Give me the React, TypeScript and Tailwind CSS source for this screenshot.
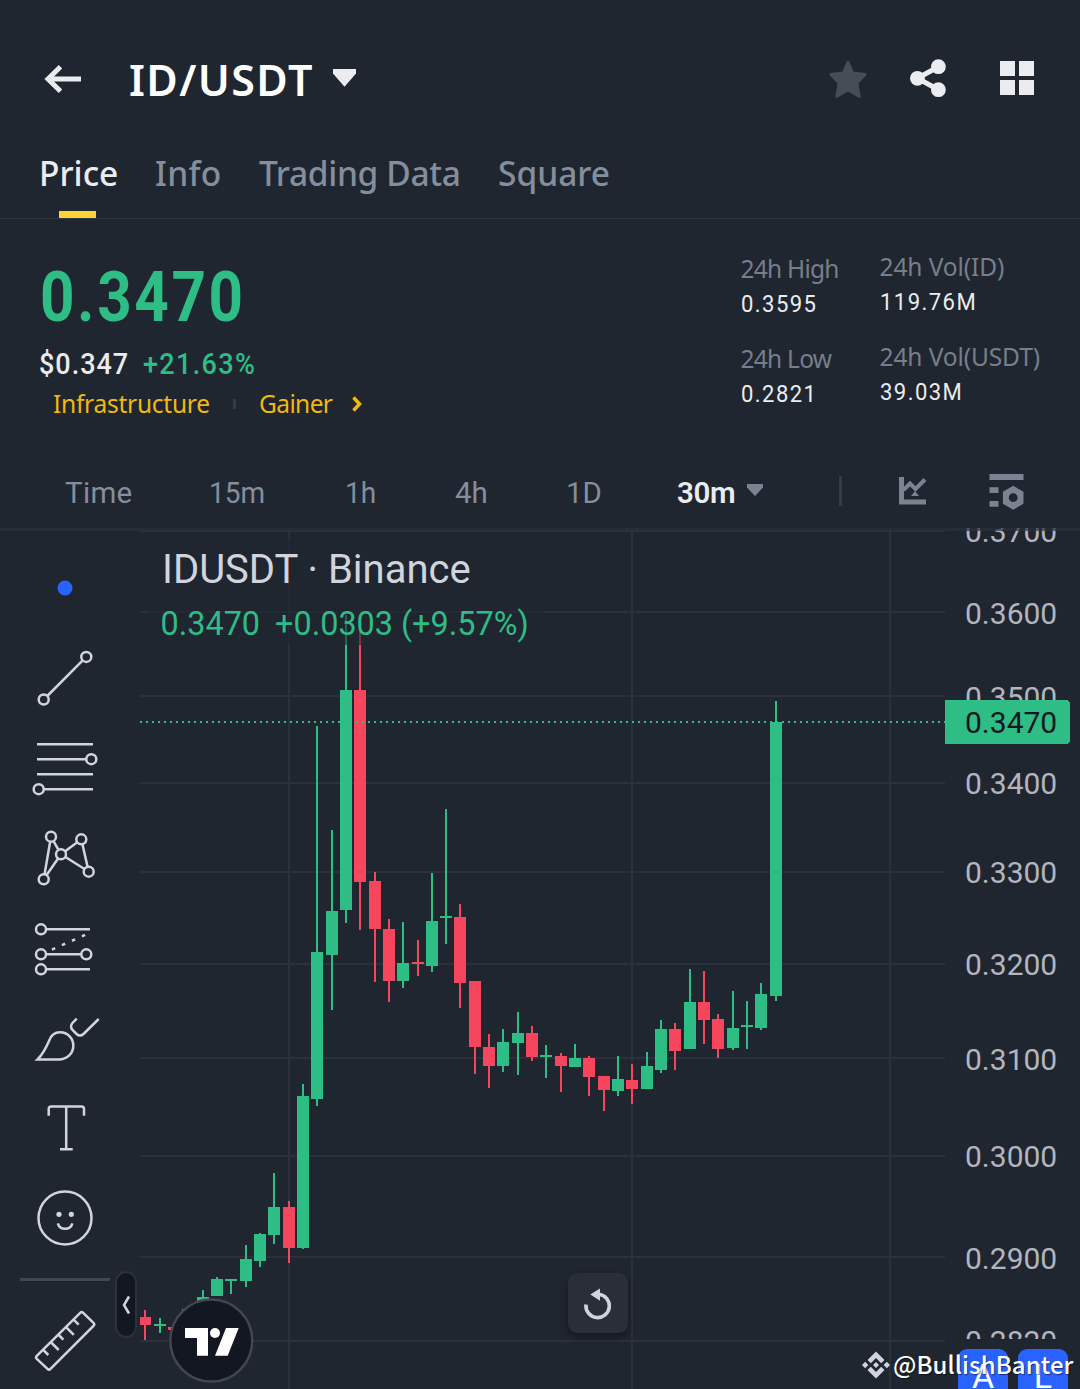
import type { ReactNode } from "react";

const GREEN = "#2ebd85";
const RED = "#f6465d";

/* x centre, body top, body bottom, wick top, wick bottom, direction */
type Candle = [number, number, number, number, number, "u" | "d"];

const candles: Candle[] = [
  [145, 1317, 1325, 1310, 1340, "d"],
  [160, 1324, 1326, 1318, 1333, "u"],
  [174, 1327, 1330, 1325, 1334, "d"],
  [188, 1309, 1328, 1307, 1330, "u"],
  [203, 1297, 1309, 1290, 1312, "u"],
  [217, 1279, 1296, 1277, 1296, "u"],
  [231, 1279, 1281, 1279, 1294, "u"],
  [246, 1259, 1281, 1245, 1287, "u"],
  [260, 1234, 1261, 1233, 1267, "u"],
  [274, 1207, 1235, 1173, 1244, "u"],
  [289, 1207, 1248, 1201, 1263, "d"],
  [303, 1096, 1248, 1084, 1249, "u"],
  [317, 952, 1099, 726, 1106, "u"],
  [332, 911, 955, 830, 1010, "u"],
  [346, 690, 910, 615, 923, "u"],
  [360, 690, 882, 632, 930, "d"],
  [375, 881, 929, 872, 982, "d"],
  [389, 929, 981, 919, 1002, "d"],
  [403, 963, 981, 922, 988, "u"],
  [418, 962, 964, 940, 976, "d"],
  [432, 921, 966, 873, 972, "u"],
  [446, 916, 918, 809, 944, "u"],
  [460, 917, 983, 904, 1008, "d"],
  [475, 981, 1047, 981, 1074, "d"],
  [489, 1047, 1066, 1034, 1088, "d"],
  [503, 1042, 1066, 1029, 1072, "u"],
  [518, 1033, 1043, 1012, 1075, "u"],
  [532, 1033, 1057, 1026, 1061, "d"],
  [546, 1055, 1057, 1045, 1078, "u"],
  [561, 1056, 1066, 1053, 1092, "d"],
  [575, 1058, 1067, 1044, 1067, "u"],
  [589, 1058, 1077, 1056, 1096, "d"],
  [604, 1076, 1090, 1076, 1111, "d"],
  [618, 1079, 1091, 1056, 1096, "u"],
  [632, 1080, 1089, 1064, 1104, "d"],
  [647, 1066, 1089, 1052, 1089, "u"],
  [661, 1029, 1070, 1020, 1073, "u"],
  [675, 1029, 1051, 1023, 1070, "d"],
  [690, 1002, 1049, 969, 1049, "u"],
  [704, 1002, 1020, 971, 1044, "d"],
  [718, 1019, 1049, 1014, 1058, "d"],
  [733, 1028, 1048, 991, 1050, "u"],
  [747, 1025, 1027, 1001, 1049, "u"],
  [761, 994, 1028, 983, 1030, "u"],
  [776, 722, 996, 701, 1001, "u"],
];

const gridRows = [531, 612, 696, 783, 872, 964, 1058, 1156, 1257, 1341];
const gridCols = [289, 632, 890];

const axisLabels: [string, number][] = [
  ["0.3700", 542],
  ["0.3600", 624],
  ["0.3500", 708],
  ["0.3400", 794],
  ["0.3300", 883],
  ["0.3200", 975],
  ["0.3100", 1070],
  ["0.3000", 1167],
  ["0.2900", 1269],
  ["0.2820", 1352],
];

function Header() {
  return (
    <header className="flex h-[156px] items-center pl-11 pr-[46px]">
      <svg width="40" height="34" viewBox="0 0 40 34" fill="none" stroke="#eaecef" strokeWidth="5" className="mt-[1px] shrink-0">
        <path d="M16.5 4.8 4 17l12.5 12.2M4 17h33" />
      </svg>
      <h1 className="mt-[3px] ml-[45px] w-[204px] whitespace-nowrap text-[43px] leading-[56px] font-semibold tracking-[1.4px] text-white">
        ID/USDT
      </h1>
      <svg width="24" height="18" viewBox="0 0 24 18" fill="#eaecef">
        <path d="M0 0h23v4.5L11.5 17.7 0 4.5z" />
      </svg>
      <svg width="40" height="40" viewBox="0 0 40 40" className="mt-[1px] mr-[0.5px] ml-auto" fill="#474d57" stroke="#474d57" strokeWidth="3" strokeLinejoin="round">
        <path d="m20 3.5 4.6 10.4 12.4 1.5-8.2 8.6 2.3 13.2L20 30.8 8.900 37.200 11.200 24 3 15.400l12.400-1.500z" />
      </svg>
      <svg width="38" height="40" viewBox="0 0 38 40" className="ml-[41px]" fill="#eaecef">
        <path d="M29.500 8.700 8.400 20.300l21.100 11.400" fill="none" stroke="#eaecef" strokeWidth="5" />
        <circle cx="29.400" cy="8.700" r="7.400" />
        <circle cx="8.400" cy="20.300" r="7.400" />
        <circle cx="29.400" cy="31.700" r="7.400" />
      </svg>
      <svg width="34" height="34" viewBox="0 0 34 34" className="ml-[53px]" fill="#eaecef">
        <path d="M0 0h15v15H0zM19 0h15v15H19zM0 19h15v15H0zM19 19h15v15H19z" />
      </svg>
    </header>
  );
}

function Tabs() {
  return (
    <nav className="flex h-[63px] border-b border-[#2f3743] pl-[39px] text-[33.500px] leading-[34px] font-medium whitespace-nowrap text-[#848e9c]">
      <div className="flex w-[116px] flex-col justify-between">
        <span className="text-[#eaecef]">Price</span>
        <span className="ml-5 h-[7.500px] w-[37px] bg-[#fcd535]" />
      </div>
      <span className="w-[104px] tracking-[0.300px]">Info</span>
      <span className="w-[239px] tracking-[-0.350px]">Trading Data</span>
      <span>Square</span>
    </nav>
  );
}

function Stat({ label, value, tight = false }: { label: string; value: string; tight?: boolean }) {
  return (
    <div className="h-[90px] whitespace-nowrap">
      <div className={tight ? "text-[24.500px] leading-[35px] tracking-[-0.750px] text-[#767e8b]" : "text-[24.500px] leading-[35px] tracking-[-0.100px] text-[#767e8b]"}>{label}</div>
      <div className="origin-left scale-x-90 font-['Roboto'] text-[24.500px] leading-[35px] tracking-[1.600px] text-[#eaecef]">{value}</div>
    </div>
  );
}

function Summary() {
  return (
    <section className="flex h-[240px] pl-[39px]">
      <div className="w-[701.500px] pt-[38px] whitespace-nowrap">
        <div className="ml-[1px] h-[80px] origin-left scale-x-[0.86] font-['Roboto'] text-[70px] leading-[80px] font-bold tracking-[3px] text-[#2ebd85]">0.3470</div>
        <div className="mt-[8px] flex h-[38px] font-['Roboto'] text-[30px] leading-[38px] font-medium">
          <span className="w-[104px] origin-left scale-x-90 tracking-[1.100px] text-[#eaecef]">$0.347</span>
          <span className="origin-left scale-x-90 tracking-[1.500px] text-[#2ebd85]">+21.63%</span>
        </div>
        <div className="mt-[2px] flex h-[37px] items-center pl-[14px] text-[24.500px] leading-[37px] text-[#f0b90b]">
          <span className="w-[180px] tracking-[-0.250px]">Infrastructure</span>
          <span className="h-[10px] w-[3px] bg-[#333b47]" />
          <span className="ml-[23px] w-[93px] tracking-[-0.600px]">Gainer</span>
          <svg width="10" height="16" viewBox="0 0 10 16" fill="none" stroke="#f0b90b" strokeWidth="3.500">
            <path d="m1.500 1.500 6 6.500-6 6.500" />
          </svg>
        </div>
      </div>
      <div className="w-[139px] pt-[32px]">
        <Stat label="24h High" value="0.3595" tight />
        <Stat label="24h Low" value="0.2821" tight />
      </div>
      <div className="pt-[30px]">
        <Stat label="24h Vol(ID)" value="119.76M" />
        <Stat label="24h Vol(USDT)" value="39.03M" />
      </div>
    </section>
  );
}

function Intervals() {
  return (
    <div className="flex h-[69px] items-center pb-[2px] pl-[65px] font-['Roboto'] text-[29.500px] leading-[40px] whitespace-nowrap text-[#848e9c]">
      <span className="w-[144px] tracking-[0.300px]">Time</span>
      <span className="w-[136px] origin-left scale-x-95">15m</span>
      <span className="w-[110px] origin-left scale-x-95">1h</span>
      <span className="w-[111px]">4h</span>
      <span className="w-[111px]">1D</span>
      <span className="w-[70px] font-semibold tracking-[-0.300px] text-[#eaecef]">30m</span>
      <svg width="16" height="12" viewBox="0 0 16 12" fill="#7b8290" className="-mt-1.5">
        <path d="M0 0h16v3.500L8 12 0 3.500z" />
      </svg>
      <span className="-mt-1 ml-[76px] h-[30px] w-[3px] bg-[#333b47]" />
      <svg width="28" height="28" viewBox="0 0 28 28" fill="none" stroke="#7b8290" className="-mt-1 ml-[57px]">
        <path d="M2.500 0v25H27" strokeWidth="5" />
        <path d="m4.500 13 6.500-6.500 5.500 5.500 9.500-9.500" strokeWidth="4" />
        <path d="M12 19h8l-4-5z" fill="#7b8290" stroke="none" />
      </svg>
      <svg width="36" height="36" viewBox="0 0 36 36" fill="#7b8290" className="-mt-0.5 ml-[62px]">
        <path d="M.500 0h34v6h-34zM.500 13.300h9v5.700h-9zM.500 27h9v5.700h-9z" />
        <path fillRule="evenodd" d="m24.200 11.800 10.300 6v11.900l-10.300 6-10.300-6V17.800zm0 7.500a4.400 4.400 0 1 0 0 8.800 4.400 4.400 0 0 0 0-8.800z" />
      </svg>
    </div>
  );
}

function Tool({ children }: { children: ReactNode }) {
  return (
    <svg width="90" height="90" viewBox="0 0 90 90" fill="none" stroke="#d1d4dc" strokeWidth="2.500" className="block shrink-0">
      {children}
    </svg>
  );
}

function Toolbar() {
  return (
    <aside className="relative flex w-[140px] shrink-0 flex-col pt-[15px] pl-5">
      <Tool>
        <circle cx="45" cy="45" r="7.500" fill="#2962ff" stroke="none" />
      </Tool>
      <Tool>
        <path d="M27.300 63 62.700 27.400" />
        <circle cx="23.700" cy="66.500" r="5" />
        <circle cx="66.300" cy="23.900" r="5" />
      </Tool>
      <Tool>
        <path d="M17 21.200h56M17 36.200h49M17 51.200h56M24 66.200h49" />
        <circle cx="71.300" cy="36.200" r="5" />
        <circle cx="18.700" cy="66.200" r="5" />
      </Tool>
      <Tool>
        <path d="M31 23.700 41 41.300 61.300 26.300 68.700 58.700 41 41.300 23.700 66.300z" />
        <g fill="#202630">
          <circle cx="31" cy="23.700" r="5" />
          <circle cx="61.300" cy="26.300" r="5" />
          <circle cx="41" cy="41.300" r="5" />
          <circle cx="23.700" cy="66.300" r="5" />
          <circle cx="68.700" cy="58.700" r="5" />
        </g>
      </Tool>
      <Tool>
        <path d="M26 26.300h44M26 51.300h35M26 66.300h44" />
        <path d="M32 46.600 66 31.500" strokeDasharray="3.500 7.400" />
        <circle cx="21" cy="26.300" r="5" />
        <circle cx="21" cy="51.300" r="5" />
        <circle cx="21" cy="66.300" r="5" />
        <circle cx="66.300" cy="51.300" r="5" />
      </Tool>
      <Tool>
        <path d="M17.500 66.500C22 62 26 55 29 48c2-6 6-8.700 11-8.700 8 0 13.300 6.200 13.300 13.200 0 8.500-6.800 14-14.300 14z" />
        <path d="m56.700 25.700-4.200 4.300q-3 3.300 0 7l4 4q3.500 3 7 0l15.200-15" />
      </Tool>
      <Tool>
        <path d="M28.700 32.700v-6.700q0-2.500 2.500-2.500h30.300q2.500 0 2.500 2.500v6.700M46.200 23.500v42.800M40 66.300h12.700" />
      </Tool>
      <Tool>
        <circle cx="45" cy="45" r="26.500" />
        <circle cx="39" cy="41.300" r="2.600" fill="#d1d4dc" stroke="none" />
        <circle cx="51.300" cy="41.300" r="2.600" fill="#d1d4dc" stroke="none" />
        <path d="M37.800 50.300a7.600 7.600 0 0 0 14.600 0" />
      </Tool>
      <div className="mt-[15px] mb-[15px] h-[3px] w-[90px] bg-[#434651]" />
      <Tool>
        <path strokeLinejoin="round" d="M60.200 16.800q1.500-1.500 3 0l10.300 10q1.500 1.500 0 3L30.500 72.800q-1.500 1.500-3 0L16.800 62.800q-1.500-1.500 0-3z" />
        <path d="m23 53.700 5.300 5.300M30.700 46l8 8M38.200 38.500l5.200 5.200M45.800 30.800l8 8M53.300 23.300l5.400 5.400" />
      </Tool>
      <div className="absolute top-[743px] left-[115px] flex h-[67px] w-[22px] items-center justify-center rounded-full border-2 border-[#2b303b] bg-[#131722]">
        <svg width="10" height="20" viewBox="0 0 10 20" fill="none" stroke="#d1d4dc" strokeWidth="2.500">
          <path d="M8 1.500 3 10l5 8.500" />
        </svg>
      </div>
    </aside>
  );
}

function CandleChart() {
  return (
    <svg width="940" height="861" viewBox="140 528 940 861" shapeRendering="crispEdges" className="block">
      <g fill="#2b303b">
        {gridRows.map((y) => (
          <rect key={y} x="140" y={y - 1} width="805" height="2" />
        ))}
        {gridCols.map((x) => (
          <rect key={x} x={x - 1} y="528" width="2" height="861" />
        ))}
      </g>
      {candles.map(([x, top, bottom, high, low, dir]) => (
        <g key={x} fill={dir === "u" ? GREEN : RED}>
          <rect x={x - 1} y={high} width="2" height={low - high} />
          <rect x={x === 145 ? 140 : x - 6} y={top} width={x === 145 ? 11 : 12} height={bottom - top} />
        </g>
      ))}
      <path d="M140 722H945" stroke={GREEN} strokeWidth="2" strokeDasharray="2 4" />
      <g fill="#b2b5be" fontFamily="Roboto, sans-serif" fontSize="30">
        {axisLabels.map(([label, y]) => (
          <text key={label} x="965" y={y}>
            {label}
          </text>
        ))}
      </g>
      <rect x="946" y="1339" width="134" height="50" fill="#202630" />
      <path d="M945 700h121q4 0 4 4v36q0 4-4 4H945z" fill={GREEN} />
      <text x="965" y="733" fill="#131722" fontFamily="Roboto, sans-serif" fontSize="30">
        0.3470
      </text>
    </svg>
  );
}

function Legend() {
  return (
    <div className="absolute top-[10px] left-[10px] h-[107px] w-[393px] bg-[#202630]/60 pl-[12px] font-['Roboto'] whitespace-nowrap">
      <div className="pt-[5px] text-[40px] leading-[54px] text-[#d1d4dc]">IDUSDT · Binance</div>
      <div className="-ml-[1.500px] flex gap-[15px] text-[32.400px] leading-[54px] text-[#2ebd85]">
        <span>0.3470</span>
        <span>+0.0303 (+9.57%)</span>
      </div>
    </div>
  );
}

function ChartOverlays() {
  return (
    <>
      <svg width="86" height="86" viewBox="0 0 86 86" className="absolute top-[769px] left-[28px]">
        <circle cx="43.300" cy="43.600" r="41" fill="#131722" stroke="#434651" strokeWidth="2.500" />
        <g fill="#fff">
          <path d="M17 31h23v27.700H29V41H17zM58 31h12.700l-11 27.700H47z" />
          <circle cx="47" cy="36" r="5" />
        </g>
      </svg>
      <button className="absolute top-[745px] left-[428px] flex h-[60px] w-[60px] items-center justify-center rounded-[9px] bg-[#2a2e39] shadow-[0_4px_8px_rgba(0,0,0,0.4)]">
        <svg width="60" height="60" viewBox="0 0 60 60" fill="none">
          <path d="M18 31.500a11.700 11.700 0 1 0 12.500-10.300" stroke="#d1d4dc" strokeWidth="3.600" />
          <path d="M22.300 21.500 32 15.500v12.300z" fill="#d1d4dc" />
        </svg>
      </button>
      <div className="absolute top-[821px] left-[818px] flex h-[40px] gap-[10px] overflow-hidden font-['Roboto'] text-[34px] leading-[54px] text-white">
        <span className="h-[50px] w-[50px] rounded-[9px] bg-[#2962ff] text-center">A</span>
        <span className="h-[50px] w-[50px] rounded-[9px] bg-[#2962ff] text-center">L</span>
      </div>
      <div className="absolute top-[820px] left-[722px] flex h-[34px] items-center whitespace-nowrap text-white">
        <svg width="28" height="28" viewBox="0 0 28 28" fill="#d1d4dc">
          <path d="m14 .500 8.500 8.500-3.300 3.300L14 7.100l-5.200 5.200L5.500 9zM14 27.500 5.500 19l3.300-3.300 5.200 5.200 5.200-5.200 3.300 3.300zM14 11l3 3-3 3-3-3zM3.200 10.800l3.200 3.200-3.200 3.200L0 14zM24.800 10.800 28 14l-3.200 3.200-3.200-3.200z" />
        </svg>
        <span className="-mt-[2px] ml-[3px] font-['Noto_Sans_CJK_SC',sans-serif] text-[24px] leading-[34px] font-medium tracking-[0.100px] [text-shadow:1px_1px_1px_rgba(0,0,0,0.5)]">@BullishBanter</span>
      </div>
    </>
  );
}

export default function App() {
  return (
    <main className="flex h-[1389px] w-[1080px] flex-col overflow-hidden bg-[#202630] font-['Noto_Sans',sans-serif]">
      <Header />
      <Tabs />
      <Summary />
      <Intervals />
      <div className="relative flex h-[861px]">
        <Toolbar />
        <div className="relative h-[861px] w-[940px] overflow-hidden">
          <CandleChart />
          <Legend />
          <ChartOverlays />
        </div>
        <div className="absolute top-0 left-0 h-[3px] w-full bg-[#2b303b]/70" />
      </div>
    </main>
  );
}
